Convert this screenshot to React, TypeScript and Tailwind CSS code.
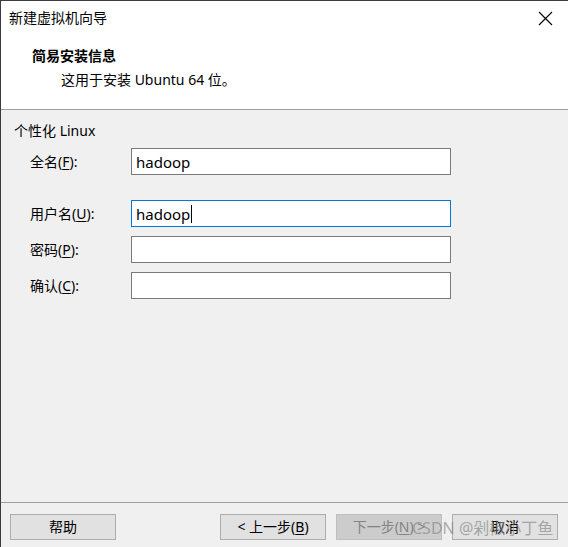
import React from 'react';

const font = { fontFamily: '"Noto Sans", "Noto Sans CJK SC", sans-serif' };

const fields = [
  { id: 1, label: '全名', key: 'F', value: 'hadoop', mt: 'mt-[7px]' },
  { id: 2, label: '用户名', key: 'U', value: 'hadoop', mt: 'mt-[25px]', focused: true },
  { id: 3, label: '密码', key: 'P', value: '', mt: 'mt-[9px]' },
  { id: 4, label: '确认', key: 'C', value: '', mt: 'mt-[9px]' },
];

const App = () => {
  return (
    <div
      className="relative w-[568px] h-[547px] bg-[#f0f0f0] border-l border-t border-[#3c3c3c] flex flex-col text-[14px] text-black overflow-hidden"
      style={font}
    >
      {/* header */}
      <div className="h-[109px] shrink-0 bg-white border-b border-[#a0a0a0]">
        <div className="h-[34px] flex items-center justify-between pl-2 pr-[15px]">
          <span className="leading-5">新建虚拟机向导</span>
          <svg width="15" height="15" viewBox="0 0 15 15" className="text-black">
            <path d="M1 1 L14 14 M14 1 L1 14" stroke="currentColor" strokeWidth="1.1" fill="none" />
          </svg>
        </div>
        <div className="mt-[11px] pl-[31px] leading-5 font-bold">简易安装信息</div>
        <div className="mt-[4px] pl-[60px] leading-5">这用于安装 Ubuntu 64 位。</div>
      </div>

      {/* body */}
      <div className="flex-1 pt-[11px]">
        <div className="pl-[13px] leading-5">个性化 Linux</div>
        {fields.map(f => (
          <div key={f.id} className={`${f.mt} flex items-center pl-[29px]`}>
            <span className="w-[101px] leading-5">
              {f.label}(<span className="underline underline-offset-2">{f.key}</span>):
            </span>
            <div
              className={`w-[320px] h-[27px] bg-white border flex items-center px-1 ${
                f.focused ? 'border-[#0078d7]' : 'border-[#7a7a7a]'
              }`}
            >
              <span className="text-[15px] leading-5">{f.value}</span>
              {f.focused && <span className="ml-px w-px h-[18px] bg-black" />}
            </div>
          </div>
        ))}
      </div>

      {/* footer */}
      <div className="h-[45px] shrink-0 border-t border-[#a0a0a0] pt-[11px] pl-[9px] pr-[10px] flex items-start">
        <button className="w-[106px] h-[26px] bg-[#e1e1e1] border border-[#adadad] leading-5">帮助</button>
        <div className="flex-1" />
        <div className="flex gap-[10px]">
          <button className="w-[106px] h-[26px] bg-[#e1e1e1] border border-[#adadad] leading-5">
            &lt; 上一步(<span className="underline underline-offset-2">B</span>)
          </button>
          <button className="w-[106px] h-[26px] bg-[#cccccc] border border-[#bfbfbf] text-[#838383] leading-5">
            下一步(<span className="underline underline-offset-2">N</span>) &gt;
          </button>
          <button className="w-[106px] h-[26px] bg-[#e1e1e1] border border-[#adadad] leading-5">取消</button>
        </div>
      </div>

      {/* watermark */}
      <div className="absolute left-[411px] top-[515px] text-[16px] leading-6 text-[#8a8a8a]/70 pointer-events-none whitespace-nowrap">
        CSDN @剁椒小丁鱼
      </div>
    </div>
  );
};

export default App;
